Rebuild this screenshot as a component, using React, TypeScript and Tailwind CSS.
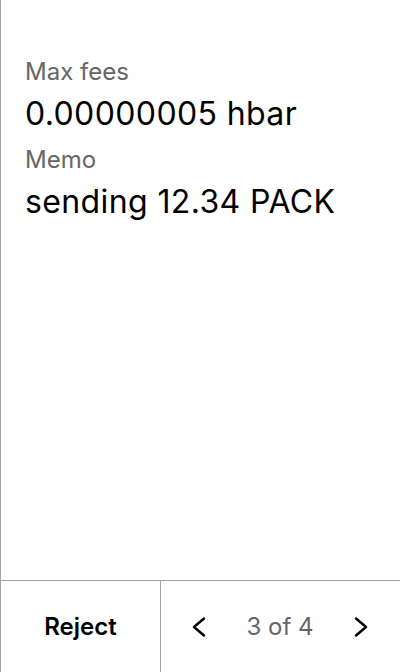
function Chevron({ dir }: { dir: 'left' | 'right' }) {
  const points = dir === 'left' ? '12,1.5 2,10 12,18.5' : '2,1.5 12,10 2,18.5';
  return (
    <svg width="14" height="20" viewBox="0 0 14 20" fill="none">
      <polyline points={points} stroke="#000" strokeWidth="2.4" strokeLinecap="round" strokeLinejoin="round" />
    </svg>
  );
}

export default function App() {
  return (
    <div
      className="h-[672px] w-[400px] flex flex-col bg-white border-l border-[#a3a3a3]"
      style={{ fontFamily: 'Inter, "Noto Sans", sans-serif' }}
    >
      <div className="flex-1 px-6 pt-[56px]">
        <div className="text-[24px] leading-[32px] text-[#666666]">Max fees</div>
        <div className="mt-[6px] text-[32px] leading-[40px] tracking-[0.012em] text-black">0.00000005 hbar</div>
        <div className="mt-[10px] text-[24px] leading-[32px] text-[#666666]">Memo</div>
        <div className="mt-[6px] text-[32px] leading-[40px] tracking-[0.012em] text-black">sending 12.34 PACK</div>
      </div>

      <div className="h-[92px] flex border-t border-[#a3a3a3]">
        <button className="w-[160px] border-r border-[#a3a3a3] flex items-center justify-center text-[24px] font-semibold text-black">
          Reject
        </button>
        <div className="flex-1 flex items-center justify-between pl-[31px] pr-[32px]">
          <Chevron dir="left" />
          <span className="text-[24px] text-[#666666]">3 of 4</span>
          <Chevron dir="right" />
        </div>
      </div>
    </div>
  );
}
